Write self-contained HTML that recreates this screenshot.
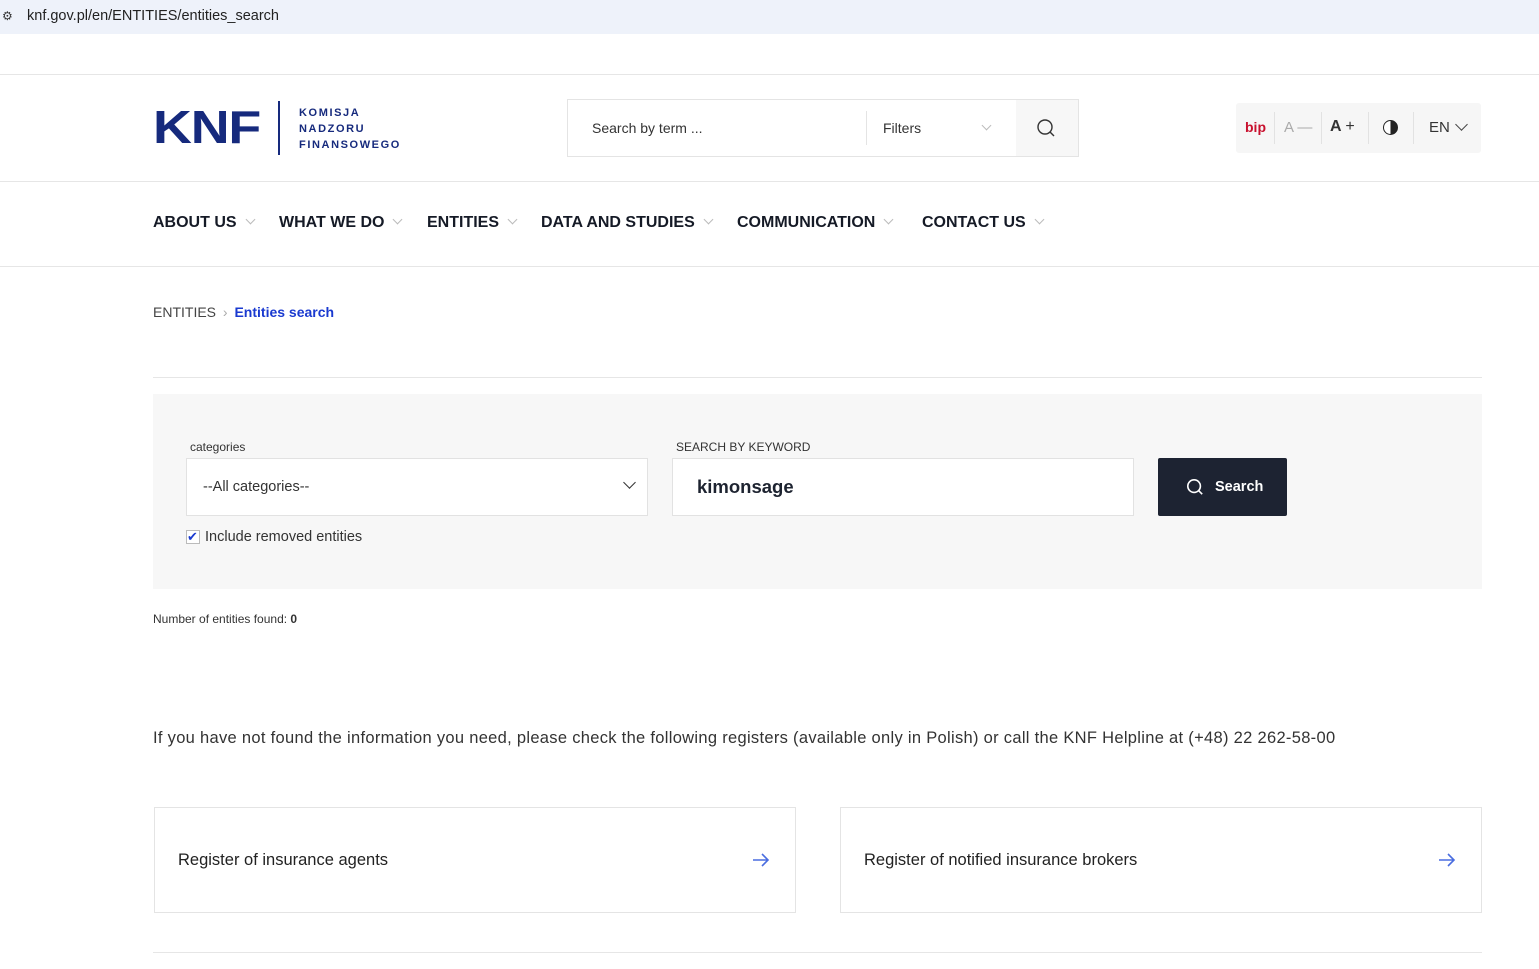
<!DOCTYPE html>
<html><head><meta charset="utf-8">
<style>
*{box-sizing:border-box;margin:0;padding:0}
body{width:1539px;height:969px;overflow:hidden;background:#fff;font-family:"Liberation Sans",sans-serif;color:#1d2330;position:relative}
.a{position:absolute}
.navi{font-size:16px;font-weight:bold;color:#151a26;top:214px}
.chev{display:inline-block;width:7px;height:7px;border-right:1.3px solid #bbb;border-bottom:1.3px solid #bbb;transform:rotate(45deg);margin-left:10px;position:relative;top:-4px}
</style></head><body>
<div class="a" style="left:0;top:0;width:1539px;height:34px;background:#eef2fa"></div>
<div class="a" style="left:2px;top:9px;font-size:12px;color:#333">⚙</div>
<div class="a" style="left:27px;top:8px;font-size:14.5px;color:#222">knf.gov.pl/en/ENTITIES/entities_search</div>
<div class="a" style="left:0;top:74px;width:1539px;height:1px;background:#e6e6e6"></div>
<div class="a" style="left:153px;top:103px;font-size:46px;font-weight:bold;color:#162a7d;letter-spacing:-1px;line-height:48px;transform:scaleX(1.17);transform-origin:left">KNF</div>
<div class="a" style="left:278px;top:101px;width:2px;height:54px;background:#162a7d"></div>
<div class="a" style="left:299px;top:105px;font-size:11px;font-weight:bold;color:#162a7d;letter-spacing:1.6px;line-height:16px">KOMISJA<br>NADZORU<br>FINANSOWEGO</div>
<div class="a" style="left:567px;top:99px;width:512px;height:58px;border:1px solid #e4e4e4"></div>
<div class="a" style="left:592px;top:120px;font-size:14px;color:#333">Search by term ...</div>
<div class="a" style="left:866px;top:111px;width:1px;height:34px;background:#e4e4e4"></div>
<div class="a" style="left:883px;top:120px;font-size:14px;color:#333">Filters</div>
<div class="a" style="left:973px;top:120px"><span class="chev"></span></div>
<div class="a" style="left:1016px;top:100px;width:62px;height:56px;background:#f7f7f7"></div>
<svg class="a" style="left:1036px;top:118px" width="20" height="20" viewBox="0 0 20 20" fill="none" stroke="#333" stroke-width="1.4"><circle cx="9" cy="9" r="7"/><path d="M14 14l4 4"/></svg>
<div class="a" style="left:1236px;top:103px;width:245px;height:50px;background:#f6f6f6;border-radius:3px"></div>
<div class="a" style="left:1245px;top:119px;font-size:14px;font-weight:bold;color:#c8102e">bip</div>
<div class="a" style="left:1274px;top:112px;width:1px;height:32px;background:#e2e2e2"></div>
<div class="a" style="left:1284px;top:119px;font-size:15px;color:#aaa">A —</div>
<div class="a" style="left:1321px;top:112px;width:1px;height:32px;background:#e2e2e2"></div>
<div class="a" style="left:1330px;top:118px;font-size:16px;font-weight:bold;color:#333">A <span style="font-weight:normal">+</span></div>
<div class="a" style="left:1368px;top:112px;width:1px;height:32px;background:#e2e2e2"></div>
<div class="a" style="left:1383px;top:120px;width:15px;height:15px;border-radius:50%;border:1.5px solid #222;background:linear-gradient(90deg,#fff 50%,#222 50%)"></div>
<div class="a" style="left:1413px;top:112px;width:1px;height:32px;background:#e2e2e2"></div>
<div class="a" style="left:1429px;top:119px;font-size:15px;color:#333">EN</div>
<div class="a" style="left:1447px;top:120px"><span class="chev" style="border-color:#444;width:9px;height:9px"></span></div>
<div class="a" style="left:0;top:181px;width:1539px;height:1px;background:#e6e6e6"></div>
<div class="a navi" style="left:153px">ABOUT US<span class="chev"></span></div>
<div class="a navi" style="left:279px">WHAT WE DO<span class="chev"></span></div>
<div class="a navi" style="left:427px">ENTITIES<span class="chev"></span></div>
<div class="a navi" style="left:541px">DATA AND STUDIES<span class="chev"></span></div>
<div class="a navi" style="left:737px">COMMUNICATION<span class="chev"></span></div>
<div class="a navi" style="left:922px">CONTACT US<span class="chev"></span></div>
<div class="a" style="left:0;top:266px;width:1539px;height:1px;background:#e6e6e6"></div>
<div class="a" style="left:153px;top:304px;font-size:14px;color:#444">ENTITIES <span style="color:#aaa;margin:0 3px">›</span> <b style="color:#1a3ad0">Entities search</b></div>
<div class="a" style="left:153px;top:377px;width:1329px;height:1px;background:#e6e6e6"></div>
<div class="a" style="left:153px;top:394px;width:1329px;height:195px;background:#f7f7f7"></div>
<div class="a" style="left:190px;top:440px;font-size:12px;color:#333">categories</div>
<div class="a" style="left:186px;top:458px;width:462px;height:58px;background:#fff;border:1px solid #e2e2e2"></div>
<div class="a" style="left:203px;top:479px;font-size:14.5px;color:#333">--All categories--</div>
<div class="a" style="left:615px;top:478px"><span class="chev" style="border-color:#333;width:9px;height:9px"></span></div>
<div class="a" style="left:186px;top:530px;width:14px;height:14px;border:1px solid #bbb;background:#fff;color:#1a3ad0;font-size:13px;line-height:12px">✔</div>
<div class="a" style="left:205px;top:529px;font-size:14.5px;color:#333">Include removed entities</div>
<div class="a" style="left:676px;top:440px;font-size:12px;color:#333">SEARCH BY KEYWORD</div>
<div class="a" style="left:672px;top:458px;width:462px;height:58px;background:#fff;border:1px solid #e2e2e2"></div>
<div class="a" style="left:697px;top:476px;font-size:18.5px;font-weight:bold;color:#1d2330">kimonsage</div>
<div class="a" style="left:1158px;top:458px;width:129px;height:58px;background:#1d2332;border-radius:2px"></div>
<svg class="a" style="left:1186px;top:478px" width="18" height="18" viewBox="0 0 20 20" fill="none" stroke="#fff" stroke-width="1.8"><circle cx="9" cy="9" r="7"/><path d="M14 14l4 4"/></svg>
<div class="a" style="left:1215px;top:479px;font-size:14.5px;font-weight:bold;color:#fff">Search</div>
<div class="a" style="left:153px;top:612px;font-size:12px;color:#333">Number of entities found: <b>0</b></div>
<div class="a" style="left:153px;top:729px;font-size:16.5px;color:#333;letter-spacing:0.3px">If you have not found the information you need, please check the following registers (available only in Polish) or call the KNF Helpline at (+48) 22 262-58-00</div>
<div class="a" style="left:154px;top:807px;width:642px;height:106px;border:1px solid #e4e4e4"></div>
<div class="a" style="left:178px;top:851px;font-size:16.5px;color:#222">Register of insurance agents</div>
<svg class="a" style="left:752px;top:852px" width="18" height="16" viewBox="0 0 18 16" fill="none" stroke="#4a6de0" stroke-width="1.6"><path d="M1 8h15M10 2l6 6-6 6"/></svg>
<div class="a" style="left:840px;top:807px;width:642px;height:106px;border:1px solid #e4e4e4"></div>
<div class="a" style="left:864px;top:851px;font-size:16.5px;color:#222">Register of notified insurance brokers</div>
<svg class="a" style="left:1438px;top:852px" width="18" height="16" viewBox="0 0 18 16" fill="none" stroke="#4a6de0" stroke-width="1.6"><path d="M1 8h15M10 2l6 6-6 6"/></svg>
<div class="a" style="left:153px;top:952px;width:1329px;height:1px;background:#e6e6e6"></div>
</body></html>
